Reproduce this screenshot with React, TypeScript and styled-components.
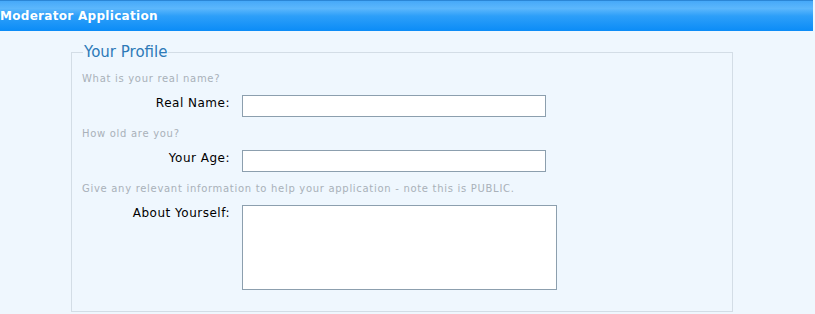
import React, { useState } from 'react';
import styled, { createGlobalStyle } from 'styled-components';

const GlobalStyle = createGlobalStyle`
    body {
        margin: 0;
        background: #eff7fe;
        font-family: "DejaVu Sans", Verdana, sans-serif;
    }
`;

const App = () => {
    const [name, setName] = useState('');
    const [age, setAge] = useState('');
    const [about, setAbout] = useState('');

    return (
        <Page>
            <GlobalStyle />
            <Header>Moderator Application</Header>
            <Content>
                <Fieldset>
                    <Legend>Your Profile</Legend>

                    <Hint>What is your real name?</Hint>
                    <Row>
                        <Label htmlFor="realname">Real Name:</Label>
                        <Input id="realname" value={name} onChange={(e) => setName(e.target.value)} />
                    </Row>

                    <Hint>How old are you?</Hint>
                    <Row>
                        <Label htmlFor="age">Your Age:</Label>
                        <Input id="age" value={age} onChange={(e) => setAge(e.target.value)} />
                    </Row>

                    <Hint>Give any relevant information to help your application - note this is PUBLIC.</Hint>
                    <Row>
                        <Label htmlFor="about">About Yourself:</Label>
                        <TextArea id="about" value={about} onChange={(e) => setAbout(e.target.value)} />
                    </Row>
                </Fieldset>
            </Content>
        </Page>
    );
};

const Page = styled.div`
    width: 815px;
    height: 314px;
    overflow: hidden;
`;

const Header = styled.div`
    width: 813px;
    height: 31px;
    box-sizing: border-box;
    border-top: 1px solid #2b86d6;
    background: linear-gradient(#46a9f9 0%, #5cb7fc 25%, #2d9ff9 50%, #0b8cf7 100%);
    color: #fff;
    font-weight: bold;
    font-size: 12px;
    letter-spacing: 0.3px;
    line-height: 31px;
    white-space: nowrap;
`;

const Content = styled.div`
    padding: 12px 0 0 71px;
`;

const Fieldset = styled.fieldset`
    width: 662px;
    box-sizing: border-box;
    margin: 0;
    border: 1px solid #d3dde6;
    padding: 10px 10px 21px 10px;
    min-width: 0;
`;

const Legend = styled.legend`
    color: #2d7ab8;
    font-size: 15px;
    padding: 0 1px;
    margin-left: 1px;
`;

const Hint = styled.div`
    color: #a9b1b9;
    font-size: 10px;
    letter-spacing: 0.7px;
    line-height: 16px;
    margin-top: 9px;

    &:first-of-type {
        margin-top: 0;
    }
`;

const Row = styled.div`
    display: flex;
    align-items: flex-start;
    gap: 12px;
    margin-top: 8px;
`;

const Label = styled.label`
    width: 148px;
    flex: none;
    text-align: right;
    font-size: 12px;
    letter-spacing: 0.5px;
    color: #000;
    padding-top: 1px;
`;

const Input = styled.input`
    width: 304px;
    height: 22px;
    box-sizing: border-box;
    border: 1px solid #8c9fae;
    background: #fff;
    margin: 0;
    padding: 2px 4px;
    font-family: inherit;
    font-size: 12px;
    outline: none;
`;

const TextArea = styled.textarea`
    width: 315px;
    height: 85px;
    box-sizing: border-box;
    border: 1px solid #8c9fae;
    background: #fff;
    margin: 0;
    padding: 2px 4px;
    resize: none;
    font-family: inherit;
    font-size: 12px;
    outline: none;
`;

export default App;
